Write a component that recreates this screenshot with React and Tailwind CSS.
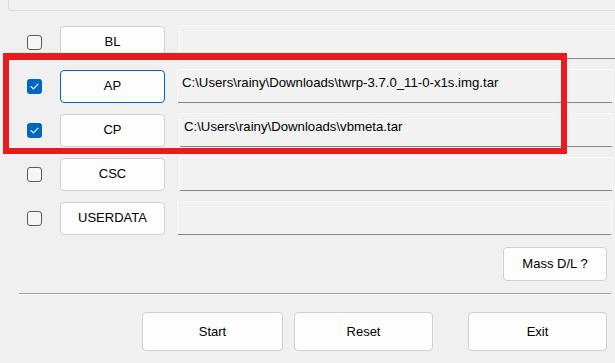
import React from "react";

const font = { fontFamily: '"Liberation Sans", Arial, sans-serif' };

function Check({ checked }) {
  if (checked) {
    return (
      <div className="w-[15px] h-[15px] rounded-[3px] bg-[#0067c0] flex items-center justify-center shrink-0">
        <svg width="9" height="7" viewBox="0 0 9 7" fill="none">
          <path d="M1 3.6 L3.4 5.8 L8 1.2" stroke="white" strokeWidth="1.1" strokeLinecap="round" strokeLinejoin="round" />
        </svg>
      </div>
    );
  }
  return <div className="w-[15px] h-[15px] rounded-[3px] border border-[#5c5c5c] bg-[#f6f6f6] shrink-0" />;
}

function Row({ label, checked, path, focused, fieldMl, fieldMr, textPt }) {
  return (
    <div className="flex items-center h-[34px]">
      <div className="ml-[27px]">
        <Check checked={checked} />
      </div>
      <div
        className={
          "ml-[18px] w-[105px] h-[33px] rounded-[4px] bg-[#fdfdfd] flex items-center justify-center text-[13px] text-black shrink-0 " +
          (focused ? "border border-[#0067c0]" : "border border-[#d0d0d0]")
        }
      >
        {label}
      </div>
      <div
        className={"flex-1 h-[34px] rounded-[2px] bg-[#f2f2f2] border border-[#fbfbfb] border-b-[#868686] text-[13.2px] text-black pl-[4px] " + fieldMl + " " + fieldMr + " " + textPt}
      >
        {path}
      </div>
    </div>
  );
}

function Btn({ children, className }) {
  return (
    <div className={"rounded-[4px] border border-[#d0d0d0] bg-[#fdfdfd] flex items-center justify-center text-[13px] text-black " + className}>
      {children}
    </div>
  );
}

export default function App() {
  return (
    <div className="w-[615px] h-[363px] bg-[#f0f0f0] relative overflow-hidden flex flex-col" style={font}>
      <div className="h-[11px] ml-[8px] border-l border-b border-[#dcdcdc] rounded-bl-[4px] shrink-0" />
      <div className="mt-[14px] flex flex-col gap-[10px]">
        <Row label="BL" fieldMl="ml-[14px]" fieldMr="-mr-[4px]" textPt="pt-[4px]" />
        <Row label="AP" checked focused path={"C:\\Users\\rainy\\Downloads\\twrp-3.7.0_11-0-x1s.img.tar"} fieldMl="ml-[12px]" fieldMr="mr-[2px]" textPt="pt-[3px]" />
        <Row label="CP" checked path={"C:\\Users\\rainy\\Downloads\\vbmeta.tar"} fieldMl="ml-[14px]" fieldMr="mr-[2px]" textPt="pt-[3px]" />
        <Row label="CSC" fieldMl="ml-[14px]" fieldMr="mr-[2px]" textPt="pt-[4px]" />
        <Row label="USERDATA" fieldMl="ml-[12px]" fieldMr="mr-[3px]" textPt="pt-[4px]" />
      </div>
      <div className="mt-[12px] flex justify-end pr-[8px]">
        <Btn className="w-[104px] h-[34px]">Mass D/L ?</Btn>
      </div>
      <div className="mt-[12px] ml-[19px] mr-[4px] border-t border-t-[#a0a0a0] border-b border-b-[#ffffff]" />
      <div className="mt-[17px] flex pl-[142px]">
        <Btn className="w-[141px] h-[39px]">Start</Btn>
        <Btn className="ml-[11px] w-[139px] h-[39px]">Reset</Btn>
        <Btn className="ml-[35px] w-[139px] h-[39px]">Exit</Btn>
      </div>
      <div className="absolute left-[3px] top-[53px] w-[564px] h-[101px] border-[6px] border-t-[7px] border-[#e81b1f] pointer-events-none" />
    </div>
  );
}
